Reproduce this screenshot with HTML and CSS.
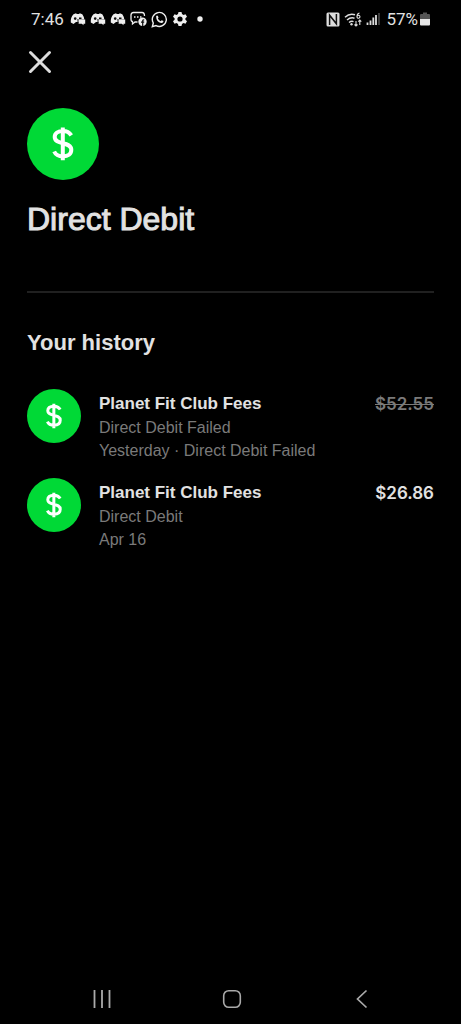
FILE: index.html
```html
<!DOCTYPE html>
<html lang="en">
<head>
<meta charset="utf-8">
<meta name="viewport" content="width=device-width, initial-scale=1">
<title>Direct Debit</title>
<link rel="stylesheet" href="styles.css">
</head>
<body>
<svg class="defs" aria-hidden="true">
  <symbol id="dollar" viewBox="0 0 72 72">
    <path d="M44.300 27.400C42.600 24.700 39.800 23 36 23C31 23 27.700 25.300 27.700 29C27.700 37.600 44.300 32.800 44.300 41.800C44.300 46 41 48.400 36 48.400C32 48.400 28.600 46.600 27.200 43.500M35.800 19.500V52.200" fill="none" stroke="#fff" stroke-width="4"/>
  </symbol>
  <symbol id="chat" viewBox="0 0 16 14">
    <path d="M3.500 2.200L6 1.300L6.800 2.100H9L9.800 1.300L12.300 2.200Q14 4.500 14.300 7.500H9V10H6L3.500 12L.8 10.500Q.3 5.500 3.500 2.200Z" fill="#eee"/>
    <circle cx="5.200" cy="6.600" r="1.300" fill="#111"/>
    <path d="M9 5.500H11.500V7H9Z" fill="#111"/>
    <path d="M8.500 7.500H15.200V11.800H13.500V13.300L11.800 11.800H8.500Z" fill="#eee"/>
    <path d="M8 7V11.500" stroke="#111" stroke-width="1"/>
  </symbol>
</svg>
<div class="screen">
  <header class="status">
    <div class="status-left">
      <span class="time">7:46</span>
      <svg width="16" height="14"><use href="#chat"/></svg>
      <svg width="16" height="14"><use href="#chat"/></svg>
      <svg width="16" height="14"><use href="#chat"/></svg>
      <svg width="17" height="16" viewBox="0 0 17 16"><path d="M7.500 11H5L2.500 13V10.500Q1 10.500 1 8V4Q1 1.500 3.500 1.500H12Q14.500 1.500 14.500 5" fill="none" stroke="#eee" stroke-width="1.300"/><path d="M4 6H5.500M7 6H8.500M10 6H11.500" stroke="#eee" stroke-width="1.600"/><circle cx="12.500" cy="10.800" r="4.200" fill="#eee"/><path d="M12.700 15V9.800Q12.700 8.700 14.200 8.800M11 11.200H14.200" fill="none" stroke="#111" stroke-width="1.200"/></svg>
      <svg width="17" height="17" viewBox="0 0 17 17"><path d="M1.300 15.700L2.300 12A7 7 0 1 1 5 14.600Z" fill="none" stroke="#eee" stroke-width="1.400"/><path d="M5.100 5.200Q6 4 6.900 5L7.500 6.500L6.900 7.600Q7.600 9.200 9.600 10.200L10.700 9.200L12.500 10.100Q12.400 12.300 10.200 12.100Q5.200 11 5.100 5.200Z" fill="#eee"/></svg>
      <svg width="16" height="16" viewBox="0 0 16 16"><path d="M6.500 1H9.500L10 3L11.500 3.900L13.500 3.200L15 5.800L13.400 7.200V8.800L15 10.200L13.500 12.800L11.500 12.100L10 13L9.500 15H6.500L6 13L4.500 12.100L2.500 12.800L1 10.200L2.600 8.800V7.200L1 5.800L2.500 3.200L4.500 3.900L6 3ZM8 5.400A2.600 2.600 0 1 0 8 10.600A2.600 2.600 0 1 0 8 5.400Z" fill="#eee" fill-rule="evenodd"/></svg>
      <svg class="more" width="6" height="6" viewBox="0 0 6 6"><circle cx="3" cy="3" r="2.700" fill="#eee"/></svg>
    </div>
    <div class="status-right">
      <svg width="14" height="15" viewBox="0 0 14 15"><path d="M2 .5H12Q13.500 .5 13.500 2V13Q13.500 14.500 12 14.500H2Q.5 14.500 .5 13V2Q.5 .5 2 .5Z" fill="#ddd"/><path d="M3.600 13V3.200L10.400 11.800V2" fill="none" stroke="#111" stroke-width="1.500"/></svg>
      <svg width="18" height="15" viewBox="0 0 18 15"><path d="M1 5.300Q5.500 1 11 2.800M3 8Q6.500 5 10.500 6.200M5 10.500Q7.500 8.600 9.500 9.600" fill="none" stroke="#ddd" stroke-width="1.500"/><circle cx="7.500" cy="12.300" r="1.200" fill="#ddd"/><path d="M15.500 1Q13 1.500 13 4.500A1.500 1.500 0 1 0 13.300 3.800M12 14V9M10.500 12.500L12 14L13.500 12.500M15.800 13V8M14.300 9.600L15.800 8L17.300 9.600" fill="none" stroke="#ddd" stroke-width="1.100"/></svg>
      <svg width="14" height="14" viewBox="0 0 14 14"><path d="M1.500 13V10.500M4.500 13V8.500M7.300 13V5.500M10 13V3" stroke="#ddd" stroke-width="1.800"/><path d="M13 13V1" stroke="#555" stroke-width="1.400"/></svg>
      <span class="percent">57%</span>
      <svg class="battery" width="10" height="14" viewBox="0 0 10 14"><path d="M3 .5H7V2H9Q10 2 10 3V7H0V3Q0 2 1 2H3Z" fill="#555"/><path d="M0 7H10V12.500Q10 13.500 9 13.500H1Q0 13.500 0 12.500Z" fill="#e6e6e6"/></svg>
    </div>
  </header>
  <main class="content">
    <button class="close" type="button" aria-label="Close"><svg width="24" height="24" viewBox="0 0 24 24"><path d="M2.500 2.500L21.500 21.500M21.500 2.500L2.500 21.500" stroke="#ddd" stroke-width="3" stroke-linecap="round"/></svg></button>
    <svg class="badge badge-large" aria-hidden="true"><use href="#dollar"/></svg>
    <h1 class="title">Direct Debit</h1>
    <section class="history">
      <h2 class="subtitle">Your history</h2>
      <ul class="list">
        <li class="row">
          <svg class="badge badge-small" aria-hidden="true"><use href="#dollar"/></svg>
          <div class="details">
            <h3 class="name">Planet Fit Club Fees</h3>
            <p class="note">Direct Debit Failed</p>
            <p class="note">Yesterday · Direct Debit Failed</p>
          </div>
          <s class="amount failed">$52.55</s>
        </li>
        <li class="row">
          <svg class="badge badge-small" aria-hidden="true"><use href="#dollar"/></svg>
          <div class="details">
            <h3 class="name">Planet Fit Club Fees</h3>
            <p class="note">Direct Debit</p>
            <p class="note">Apr 16</p>
          </div>
          <span class="amount">$26.86</span>
        </li>
      </ul>
    </section>
  </main>
  <nav class="navbar">
    <button class="nav-button" type="button" aria-label="Recent apps"><svg width="20" height="20" viewBox="0 0 20 20"><path d="M2.500 1V19M10 1V19M17.500 1V19" stroke="#aaa" stroke-width="1.800"/></svg></button>
    <button class="nav-button" type="button" aria-label="Home"><svg width="20" height="20" viewBox="0 0 20 20"><rect x="1.700" y="1.700" width="16.600" height="16.600" rx="5" fill="none" stroke="#aaa" stroke-width="1.600"/></svg></button>
    <button class="nav-button" type="button" aria-label="Back"><svg width="20" height="20" viewBox="0 0 20 20"><path d="M14.500 1.500L5.500 10L14.500 18.500" fill="none" stroke="#aaa" stroke-width="1.700"/></svg></button>
  </nav>
</div>
</body>
</html>
```
FILE: styles.css
```css
* {
  box-sizing: border-box;
}

body {
  margin: 0;
  background: #000;
  color: #e2e2e2;
  font-family: "Liberation Sans", Arial, sans-serif;
}

h1, h2, h3, p, ul {
  margin: 0;
  padding: 0;
}

button {
  padding: 0;
  border: 0;
  background: none;
}

svg {
  display: block;
  flex: none;
}

.defs {
  position: absolute;
  width: 0;
  height: 0;
}

.screen {
  display: flex;
  flex-direction: column;
  min-height: 100vh;
}

.status {
  display: flex;
  justify-content: space-between;
  align-items: center;
  height: 38px;
  padding: 0 31px;
  font-family: Roboto, sans-serif;
  font-size: 17px;
}

.status-left,
.status-right {
  display: flex;
  align-items: center;
  gap: 4px;
}

.time {
  margin-right: 2px;
}

.more {
  margin-left: 5px;
}

.percent {
  margin-left: 2px;
}

.battery {
  margin-left: -2px;
}

.content {
  flex: 1;
  padding: 12px 27px 0;
}

.close {
  display: block;
  margin-left: 1px;
}

.badge {
  border-radius: 50%;
  background: #00d936;
}

.badge-large {
  width: 72px;
  height: 72px;
  margin-top: 34px;
}

.badge-small {
  width: 54px;
  height: 54px;
}

.title {
  margin-top: 19px;
  font-size: 32px;
  font-weight: 400;
  line-height: 40px;
  -webkit-text-stroke: 1px currentColor;
}

.history {
  margin-top: 52px;
  padding-top: 36px;
  border-top: 2px solid #202020;
}

.subtitle {
  font-size: 22px;
  line-height: 28px;
}

.list {
  display: grid;
  gap: 16px;
  margin-top: 32px;
  list-style: none;
}

.row {
  display: flex;
  align-items: flex-start;
  gap: 18px;
}

.details {
  flex: 1;
  padding-top: 3px;
}

.name {
  font-size: 17px;
  line-height: 24px;
}

.note {
  color: #7a7a7a;
  font-size: 16px;
  line-height: 23px;
}

.amount {
  padding-top: 3px;
  font-family: Inter, sans-serif;
  font-size: 17px;
  font-weight: 600;
  line-height: 24px;
}

.failed {
  color: #7a7a7a;
}

.navbar {
  display: flex;
  justify-content: center;
  gap: 110px;
  padding: 14px 0 15px 3px;
}
```
